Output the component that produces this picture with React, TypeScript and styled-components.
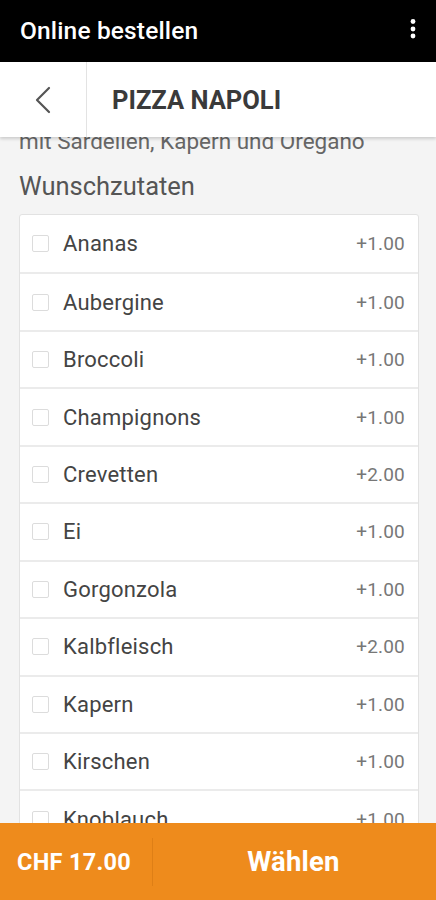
import React from "react";
import styled, { createGlobalStyle } from "styled-components";

type Extra = { name: string; price: string };

const extras: Extra[] = [
  { name: "Ananas", price: "+1.00" },
  { name: "Aubergine", price: "+1.00" },
  { name: "Broccoli", price: "+1.00" },
  { name: "Champignons", price: "+1.00" },
  { name: "Crevetten", price: "+2.00" },
  { name: "Ei", price: "+1.00" },
  { name: "Gorgonzola", price: "+1.00" },
  { name: "Kalbfleisch", price: "+2.00" },
  { name: "Kapern", price: "+1.00" },
  { name: "Kirschen", price: "+1.00" },
  { name: "Knoblauch", price: "+1.00" },
  { name: "Mais", price: "+1.00" },
];

const App: React.FC = () => {
  return (
    <Page>
      <GlobalStyle />
      <AppBar>
        <AppTitle>Online bestellen</AppTitle>
        <MoreButton aria-label="Mehr">
          <svg width="8" height="22" viewBox="0 0 8 22">
            <circle cx="4" cy="3.5" r="2.4" fill="#fff" />
            <circle cx="4" cy="11" r="2.4" fill="#fff" />
            <circle cx="4" cy="18" r="2.4" fill="#fff" />
          </svg>
        </MoreButton>
      </AppBar>

      <Header>
        <BackButton aria-label="Zurück">
          <svg width="18" height="28" viewBox="0 0 18 28">
            <path
              d="M15 2 L3 14 L15 26"
              fill="none"
              stroke="#555"
              strokeWidth="2.2"
              strokeLinecap="round"
              strokeLinejoin="round"
            />
          </svg>
        </BackButton>
        <HeaderTitle>PIZZA NAPOLI</HeaderTitle>
      </Header>

      <ScrollArea>
        <Content>
          <Description>mit Sardellen, Kapern und Oregano</Description>
          <SectionTitle>Wunschzutaten</SectionTitle>
          <Card>
            {extras.map((item) => (
              <Row key={item.name}>
                <Checkbox />
                <ItemName>{item.name}</ItemName>
                <Price>{item.price}</Price>
              </Row>
            ))}
          </Card>
        </Content>
      </ScrollArea>

      <Footer>
        <Total>CHF 17.00</Total>
        <Divider />
        <ChooseButton>Wählen</ChooseButton>
      </Footer>
    </Page>
  );
};

export default App;

const GlobalStyle = createGlobalStyle`
  html, body {
    margin: 0;
    padding: 0;
    background: #f4f4f4;
    font-family: Roboto, "Noto Sans", Arial, sans-serif;
  }
  * {
    box-sizing: border-box;
  }
`;

const Page = styled.div`
  width: 436px;
  height: 900px;
  display: flex;
  flex-direction: column;
  overflow: hidden;
  background: #f4f4f4;
`;

const AppBar = styled.div`
  height: 62px;
  flex-shrink: 0;
  background: #000;
  display: flex;
  align-items: center;
  justify-content: space-between;
  padding: 0 20px;
`;

const AppTitle = styled.div`
  color: #fff;
  font-size: 24.5px;
  font-weight: 500;
  letter-spacing: 0.15px;
  margin-top: -2px;
`;

const MoreButton = styled.div`
  display: flex;
  align-items: center;
  margin-top: -5px;
  margin-right: -1px;
`;

const Header = styled.div`
  height: 75px;
  flex-shrink: 0;
  background: #fff;
  display: flex;
  align-items: stretch;
  position: relative;
  z-index: 2;
  box-shadow: 0 2px 3px rgba(0, 0, 0, 0.16);
`;

const BackButton = styled.div`
  width: 87px;
  border-right: 1px solid #e3e3e3;
  display: flex;
  align-items: center;
  justify-content: center;
`;

const HeaderTitle = styled.div`
  display: flex;
  align-items: center;
  padding-left: 25px;
  font-size: 25.5px;
  font-weight: 700;
  color: #3a3a3a;
`;

const ScrollArea = styled.div`
  flex: 1;
  overflow: hidden;
`;

const Content = styled.div`
  margin-top: -9px;
  padding: 0 17px 0 19px;
`;

const Description = styled.div`
  font-size: 22.5px;
  line-height: 26px;
  color: #666;
`;

const SectionTitle = styled.div`
  margin-top: 17px;
  font-size: 25.5px;
  line-height: 30px;
  color: #555;
`;

const Card = styled.div`
  margin-top: 13px;
  background: #fff;
  border: 1px solid #e2e2e2;
  border-radius: 3px;
  overflow: hidden;
`;

const Row = styled.div`
  height: 57.44px;
  display: flex;
  align-items: center;
  padding: 0 13px 0 12px;
  & + & {
    border-top: 2px solid #ebebeb;
  }
`;

const Checkbox = styled.span`
  width: 17px;
  height: 17px;
  border: 1.5px solid #dcdcdc;
  border-radius: 2px;
  flex-shrink: 0;
  margin-right: 14px;
`;

const ItemName = styled.span`
  flex: 1;
  font-size: 22px;
  letter-spacing: 0.2px;
  color: #444;
`;

const Price = styled.span`
  font-size: 19px;
  letter-spacing: 0.2px;
  color: #777;
`;

const Footer = styled.div`
  height: 77px;
  flex-shrink: 0;
  background: #ee8b1c;
  display: flex;
  align-items: center;
  position: relative;
  z-index: 2;
`;

const Total = styled.div`
  width: 152px;
  padding-left: 17px;
  color: #fff;
  font-size: 23.5px;
  font-weight: 700;
  letter-spacing: 0.3px;
  white-space: nowrap;
`;

const Divider = styled.div`
  width: 1px;
  height: 48px;
  background: rgba(160, 80, 0, 0.2);
`;

const ChooseButton = styled.div`
  flex: 1;
  text-align: center;
  color: #fff;
  font-size: 27.5px;
  font-weight: 700;
  letter-spacing: 0.2px;
  margin-right: 2px;
`;
